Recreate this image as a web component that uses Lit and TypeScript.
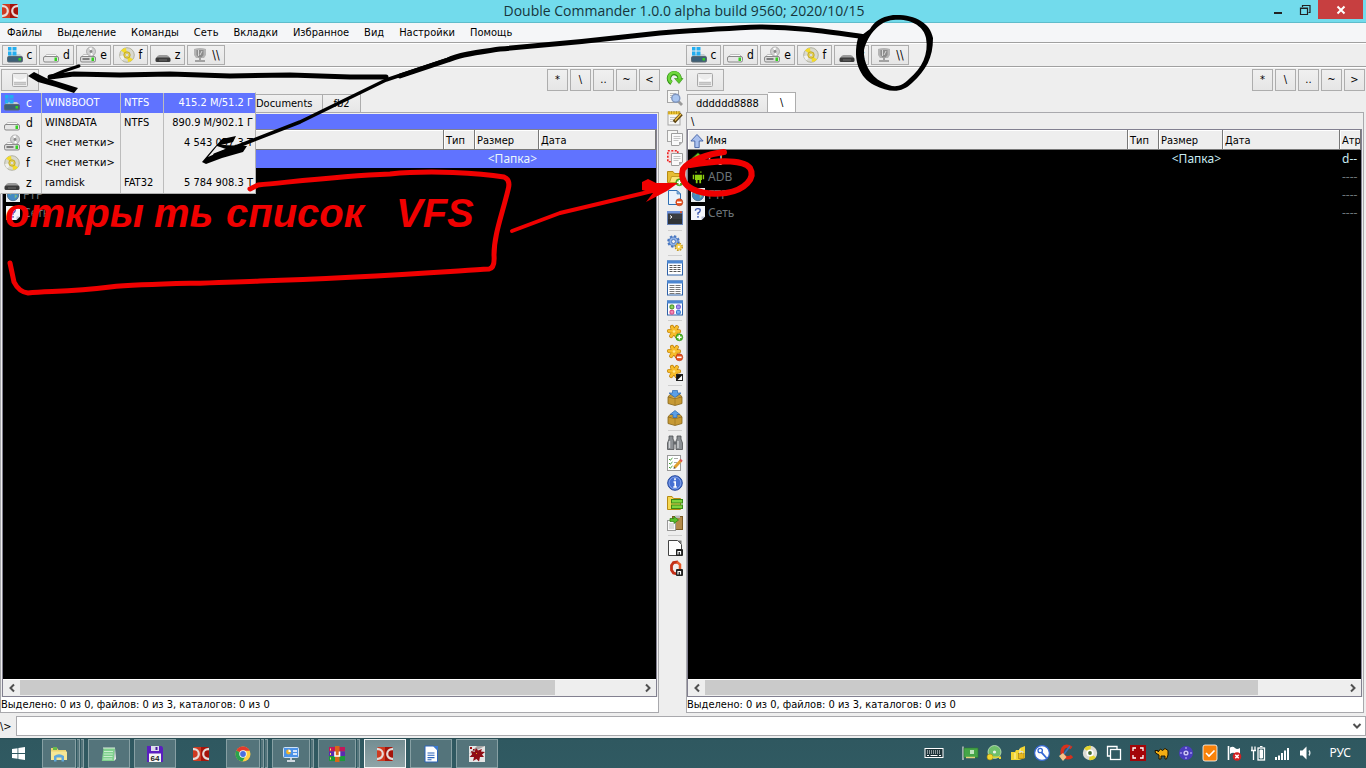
import { LitElement, html, svg, css, nothing, TemplateResult } from "lit";
import { customElement } from "lit/decorators.js";
import { classMap } from "lit/directives/class-map.js";

type Icon = TemplateResult;

const icon = (body: Icon, size = 16) =>
  html`<svg class="icon" width=${size} height=${size} viewBox="0 0 16 16" aria-hidden="true">${body}</svg>`;

/* ---- drives ---- */
const driveBody = (fill: string, led = true) => svg`
  <path d="M2 9.500 L3.500 7.500 H12.500 L14.500 9.500 Z" fill="#fafafa" stroke="#aaa" stroke-width=".7"/>
  <rect x=".5" y="9.500" width="15" height="5.500" rx="1.500" fill=${fill} stroke="#888"/>
  ${led ? svg`<rect x="11.500" y="10.500" width="2.500" height="3.500" fill="#35d020"/>` : nothing}`;
const iDriveC = svg`
  <path d="M1 9.500 L3 7 H13 L15.500 9.500 Z" fill="#c3ccd1"/>
  <rect x=".5" y="9.500" width="15" height="5.500" rx="1.200" fill="#3d5f77" stroke="#5b6870"/>
  <rect x="11.500" y="11" width="2.500" height="2.500" fill="#35d020"/>
  <path d="M1 0h3.500v3.500H1zM5.500 0H9.500v3.500H5.500zM1 4.500h3.500v4H1zM5.500 4.500H9.500v4H5.500z" fill="#23aef0"/>`;
const iDriveD = driveBody("#e6e6e6");
const iDriveE = svg`
  ${driveBody("#dcdcdc")}
  <circle cx="11" cy="4.500" r="4.500" fill="#d0d0d0" stroke="#999" stroke-width=".7"/>
  <path d="M11 4.500 L9 1 A4 4 0 0 1 12 .6 ZM11 4.500 L13 8 A4 4 0 0 1 10.500 8.400Z" fill="#fff"/>
  <circle cx="11" cy="4.500" r="1.400" fill="#888"/>
  <path d="M2.500 12h7" stroke="#555" stroke-width="1.400"/>`;
const iDriveF = svg`
  <circle cx="8" cy="8" r="7.300" fill="#d9d9cf" stroke="#a5a58f" stroke-width=".8"/>
  <path d="M8 8 L2 3.500 A7.300 7.300 0 0 1 7 .9 ZM8 8 L14 12.500 A7.300 7.300 0 0 1 9 15Z" fill="#f4dc28"/>
  <path d="M8 8 L.9 9 A7 7 0 0 0 3.500 13.500Z" fill="#f0f0f0"/>
  <circle cx="8" cy="8" r="3.200" fill="#eed84c" stroke="#b39a20" stroke-width=".8"/>
  <circle cx="8" cy="8" r="1.300" fill="#fff" stroke="#999" stroke-width=".5"/>`;
const iDriveZ = svg`
  <path d="M1 11 Q3 7.500 5 8 H11 Q13 7.500 15 11 V12 H1Z" fill="#9a9a9a"/>
  <rect x=".5" y="10.500" width="15" height="4.500" rx="1.500" fill="#3c3c3c"/>
  <path d="M4 13h8" stroke="#6f6f6f"/>`;
const iNet = svg`
  <path d="M2 2 Q8 0 14 2 V8 L12 11 H4 L2 8Z" fill="#b4b4b4"/>
  <path d="M4.500 3 H11.500 V8 L9.500 10.500 H6.500 L4.500 8Z" fill="#8c8c8c"/>
  <path d="M6.500 3v6M10 4l-2 4" stroke="#d9d9d9"/>
  <path d="M3 14 H13 M8 11 V14" stroke="#a2a2a2" stroke-width="2"/>`;
const iDriveGray = svg`
  <rect x=".5" y="1.500" width="15" height="13" rx="1" fill="#ececec" stroke="#a8a8a8"/>
  <path d="M2 5 Q8 11 14 5 V9 H2Z" fill="#fbfbfb"/>
  <rect x="2" y="10" width="12" height="3" fill="#c0c0c0"/>
  <path d="M2.500 11.500h11" stroke="#dedede" stroke-dasharray="1 1"/>`;

/* ---- column of commands ---- */
const iRefresh = svg`<path d="M4.500 13 A5.300 5.300 0 1 1 12.500 9" fill="none" stroke="#2f8f12" stroke-width="4.400"/>
  <path d="M7.500 8.500 H16 L12 13.500Z" fill="#5cc92c" stroke="#2f8f12" stroke-width=".6"/>
  <path d="M4.500 12.500 A5.300 5.300 0 1 1 12.500 9" fill="none" stroke="#6ed63c" stroke-width="2.800"/>`;
const paper = (x: number, y: number, w: number, h: number) => svg`
  <rect x=${x} y=${y} width=${w} height=${h} fill="#f7f7f5" stroke="#a5a5a5"/>`;
const iView = svg`${paper(0.5, 0.5, 11, 12)}<path d="M3 3.500h6M3 5.500h3M3 7.500h2" stroke="#bbb"/>
  <path d="M11.500 11.500 L15 15" stroke="#9a9a9a" stroke-width="2.800"/>
  <circle cx="8.800" cy="8.300" r="4" fill="#a9c5ef" stroke="#7f95bd" stroke-width="1.400"/>`;
const iEdit = svg`${paper(1, 2, 12, 13)}<path d="M1 1.500h12v3H1z" fill="#efc52e"/><path d="M2 1v3M4.500 1v3M7 1v3M9.500 1v3M12 1v3" stroke="#a98210" stroke-width=".7"/>
  <path d="M3 7.500h7M3 9.500h5M3 11.500h6" stroke="#c5c5c5"/><path d="M7 12 L14.500 4" stroke="#5d4410" stroke-width="3.400"/><path d="M8 10.500 L14 4" stroke="#f0c24a" stroke-width="1.400"/>`;
const iCopy = svg`${paper(0.5, 0.5, 10, 11)}<path d="M4.500 3.500H15.500V12L12 15.500H4.500Z" fill="#fafafa" stroke="#9d9d9d"/>
  <path d="M6.500 6.500h7M6.500 8.500h7M6.500 10.500h5" stroke="#c4c4c4"/><path d="M12 15.500V12H15.500Z" fill="#aaa"/>`;
const iMove = svg`<rect x=".8" y=".8" width="10" height="11" fill="#f6dada" stroke="#ee2222" stroke-width="1.600" stroke-dasharray="2 1.500"/>
  <path d="M4.500 3.500H15.500V12L12 15.500H4.500Z" fill="#fafafa" stroke="#9d9d9d"/><path d="M6.500 6.500h7M6.500 8.500h7M6.500 10.500h5" stroke="#c4c4c4"/><path d="M12 15.500V12H15.500Z" fill="#aaa"/>`;
const plus = svg`<circle cx="12.300" cy="12.300" r="3.500" fill="#4fb82a" stroke="#2b8a12" stroke-width=".6"/><path d="M12.300 10v4.600M10 12.300h4.600" stroke="#fff" stroke-width="1.400"/>`;
const minus = svg`<circle cx="12.300" cy="12.300" r="3.500" fill="#e8501e" stroke="#b53610" stroke-width=".6"/><path d="M10 12.300h4.600" stroke="#fff" stroke-width="1.600"/>`;
const iMkdir = svg`<path d="M.5 1.500H6L7.500 3.500H13.500V12.500H.5Z" fill="#e6bd33" stroke="#b78a12"/><path d="M2.500 12.500 L4.500 6.500H15.500L13 12.500Z" fill="#fbe577" stroke="#c29a22"/>${plus}`;
const iDelete = svg`<path d="M1.500 .5H10L13.500 4V14.500H1.500Z" fill="#e9f2fb" stroke="#2f6fb3"/><path d="M10 .5V4H13.500Z" fill="#8ab6e0" stroke="#2f6fb3" stroke-width=".6"/>${minus}`;
const iTerm = svg`<rect x=".5" y="1.500" width="15" height="13" fill="#3a3d42" stroke="#6683bb"/><path d="M0 1h16v2.500H0z" fill="#6e91d8"/><rect x="13" y="1.300" width="2" height="1.600" fill="#e7521f"/>
  <path d="M3 5.500 L5 7 L3 8.500" fill="none" stroke="#fff"/><path d="M1 9h14v5H1z" fill="#202226" opacity=".4"/>`;
const iGears = svg`<circle cx="6.500" cy="6.500" r="5" fill="none" stroke="#4a79c2" stroke-width="2.600" stroke-dasharray="2.200 1.700"/><circle cx="6.500" cy="6.500" r="4.600" fill="#8fb1e6" stroke="#3c6bb5" stroke-width=".8"/><circle cx="6.500" cy="6.500" r="2" fill="#eee" stroke="#3c6bb5" stroke-width=".8"/>
  <circle cx="11.800" cy="11.800" r="3.300" fill="none" stroke="#c2930f" stroke-width="1.800" stroke-dasharray="1.600 1"/><circle cx="11.800" cy="11.800" r="2.900" fill="#f7cf4a"/><circle cx="11.800" cy="11.800" r="1.100" fill="#fff"/>`;
const win = svg`<rect x=".5" y="1" width="15" height="14" fill="#fff" stroke="#2f62a8"/><path d="M0 .5h16v3H0z" fill="#4c86d0"/>`;
const iBrief = svg`${win}<path d="M2.500 5.500h11M2.500 7.500h11M2.500 9.500h11M2.500 11.500h11" stroke="#555" stroke-dasharray="3 1"/>`;
const iFull = svg`${win}<path d="M2.500 5.500h11M2.500 7.500h11M2.500 9.500h11M2.500 11.500h11M2.500 13.500h11" stroke="#777" stroke-dasharray="5 1"/>`;
const iThumb = svg`${win}<rect x="3" y="5" width="3.800" height="3.800" rx="1" fill="#8bd05c" stroke="#3c8a1c"/><rect x="9.500" y="5" width="3.800" height="3.800" rx="1" fill="#a896ee" stroke="#6a4fd0"/>
  <rect x="3" y="10.300" width="3.800" height="3.800" rx="1" fill="#f08ab4" stroke="#d03a7a"/><rect x="9.500" y="10.300" width="3.800" height="3.800" rx="1" fill="#7ab0ee" stroke="#2a70cc"/>`;
const petals = "M7 6.500 L5 2 M7 6.500 L9.800 2.200 M7 6.500 L12 6.300 M7 6.500 L9.500 11 M7 6.500 L4.200 11 M7 6.500 L2 6";
const star = svg`<path d=${petals} stroke="#bd7d08" stroke-width="4.200" stroke-linecap="round"/><path d=${petals} stroke="#f7bd2c" stroke-width="2.800" stroke-linecap="round"/><circle cx="7" cy="6.500" r="1.300" fill="#fde48a"/>`;
const iStarPlus = svg`${star}${plus}`;
const iStarMinus = svg`${star}${minus}`;
const iStarInv = svg`${star}<rect x="9.500" y="9.500" width="6" height="6" fill="#fff" stroke="#222"/><path d="M10 10h5.500L10 15.500Z" fill="#111"/>`;
const box = svg`<path d="M1 7 L3 4.500 H13 L15 7 V13.500 L8 15.500 L1 13.500Z" fill="#c79a35" stroke="#86641a" stroke-width=".8"/><path d="M1 7 L8 8.500 L15 7" fill="#e3c06a" stroke="#86641a" stroke-width=".8"/><path d="M8 8.500V15" stroke="#a67e28"/>`;
const iPack = svg`${box}<path d="M5.500 .5h5v2.500H14L8 7.500 2 3h3.500Z" fill="#5b9fe6" stroke="#2b66ae" stroke-width=".7"/>`;
const iUnpack = svg`${box}<path d="M6 7.500h4v-3H13L8 .5 3 4.500h3Z" fill="#5b9fe6" stroke="#2b66ae" stroke-width=".7"/>`;
const iFind = svg`<path d="M2 1h4v3l1 2v8.500H.5V8L2 4ZM10 1h4v3l1.500 4v6.500H9V6l1-2Z" fill="#8b8f93" stroke="#4c4f52" stroke-width=".8"/><path d="M2.500 6v7M11 6v7" stroke="#cfd2d4" stroke-width="1.400"/><path d="M6.500 6.500h3v3h-3z" fill="#63676a"/>`;
const iMulti = svg`<rect x=".5" y=".5" width="13" height="15" fill="#fff" stroke="#999"/><path d="M2 4l1.200 1.200L5.500 3M2 8l1.200 1.200L5.500 7M2 12l1.200 1.200L5.500 11" fill="none" stroke="#3a9b2a"/><path d="M7 3.500h4M7 7.500h3" stroke="#aaa"/>
  <path d="M7.500 12.500 L14 5.500" stroke="#e0a030" stroke-width="3"/><path d="M13 4.500l2 2" stroke="#dd5555" stroke-width="2"/><path d="M6.500 13.800l.5-2 1.500 1.400Z" fill="#333"/>`;
const iInfo = svg`<circle cx="8" cy="8" r="7.300" fill="#4670d2" stroke="#274a9c"/><circle cx="8" cy="8" r="5.900" fill="none" stroke="#9ab5f2" stroke-width=".7"/><path d="M8 3.200v2M6.500 7h1.700v5M6.300 12h3.500" fill="none" stroke="#fff" stroke-width="1.600"/>`;
const iSync = svg`<path d="M.5 1.500H5L6.500 3.500H13.500V14.500H.5Z" fill="#f4d750" stroke="#b78a12"/><rect x="4.500" y="4.500" width="11" height="3.500" fill="#7ed43e" stroke="#3c8716"/><rect x="4.500" y="10" width="11" height="3.500" fill="#7ed43e" stroke="#3c8716"/>`;
const iCopyNames = svg`<rect x="5.500" y="1.500" width="10" height="13" fill="#b38a4a" stroke="#7b5b24"/><rect x="8" y=".5" width="5" height="2.500" fill="#bbb"/><rect x=".5" y="5.500" width="8" height="10" fill="#fafafa" stroke="#999"/><path d="M2 9h5M2 11h5M2 13h5" stroke="#bbb"/><path d="M3 3.500H7V1.500L11.500 5L7 8.500V6.500H3Z" fill="#57c22c" stroke="#2c7d10" stroke-width=".7"/>`;
const linkMark = svg`<rect x="9" y="9" width="7" height="7" rx="1" fill="#222"/><path d="M11 14.500v-3h2.500v3" fill="none" stroke="#fff" stroke-width="1.200"/>`;
const iNewDoc = svg`<path d="M1.500 .5H10.500L14.500 4.500V15.500H1.500Z" fill="#fff" stroke="#444"/><path d="M10.500 .5H14.500V4.500Z" fill="#777"/>${linkMark}`;
const iOffice = svg`<path d="M11 2 L6.500 2.500 L4.500 5.500 V10 L6.500 13 L10 14" fill="none" stroke="#c22f17" stroke-width="2.800"/><path d="M10 2 L13 4.500 V9" fill="none" stroke="#e65a2a" stroke-width="2.500"/>${linkMark}`;

/* ---- file list ---- */
const iUp = svg`<path d="M8 1 L15 7.500 H11 V11 H14 V14.500 H5 V7.500 H1Z" fill="#6cc62c" stroke="#2f7f12"/>`;
const iAndroid = svg`<path d="M4.500 5.500h8v6h-8zM2 5.500h1.600v5H2zM13.400 5.500H15v5h-1.600zM5.500 11.500h2v3.500h-2zM9.500 11.500h2v3.500h-2z" fill="#8ccf10"/><path d="M5 3.500h1.500v-2H5zM10.500 3.500H12v-2h-1.500z" fill="#8ccf10" opacity=".7"/>`;
const iFtp = svg`<path d="M0 0h16v16H0z" fill="#e8eef2"/><circle cx="8" cy="8" r="6.500" fill="#4389c4" stroke="#4a6d88"/><path d="M4 5 Q7 2 9 4 Q8 7 6 7 T5 10ZM10 7 L13 9 L10 12Z" fill="#7dbb83"/>`;
const iUnknown = svg`<path d="M0 0h16v12l-4 4H0z" fill="#f3f5fb"/><path d="M12 16v-4h4Z" fill="#b9c1d6"/><path d="M5 5.500 Q5 3 8 3 T10.500 5.200 Q10.500 7 8 8 V10M8 11.500v2" fill="none" stroke="#3a56b0" stroke-width="1.600"/>`;
const iSort = svg`<path d="M8 .5 L15 8 H10.500 V15.500 H5.500 V8 H1Z" fill="#a9c0ee" stroke="#3d5ba0"/>`;

/* ---- logos ---- */
const iDC = svg`<rect x="0" y="1" width="16" height="14" rx="1.500" fill="#cf3a20"/><path d="M8 1h6.500L16 2.500v11L14.500 15H8z" fill="#a5140a"/>
  <path d="M0 3.200 H1 A4.800 4.800 0 0 1 1 12.800 H0M16 3.200 H15 A4.800 4.800 0 0 0 15 12.800 H16" fill="none" stroke="#e6dbd8" stroke-width="2.200"/>`;
const iStart = svg`<path d="M0 2.500 L6.800 1.500V7.500H0ZM7.800 1.300 L16 0V7.500H7.800ZM0 8.500H6.800V14.500L0 13.500ZM7.800 8.500H16V16L7.800 14.700Z" fill="#fff"/>`;
const iExplorer = svg`<path d="M0 2H6L7.500 4H15V14H0Z" fill="#ecd572"/><path d="M2 1h4v3H2z" fill="#66b84a"/><path d="M0 5.500H16V14H0Z" fill="#f6e796"/><path d="M3 15.500V10Q8 6.500 13 10V15.500H10.500V11.500H5.500V15.500Z" fill="#5fa8dd"/>`;
const iNotepad = svg`<path d="M2.500 2H14L13 15H.8Z" fill="#7fd08d"/><path d="M3 5.500h9M2.800 8h9M2.500 10.500h9M2.300 13h9" stroke="#c9f0cf"/><path d="M3 1v2M5 1v2M7 1v2M9 1v2M11 1v2M13 1v2" stroke="#dceedd"/><path d="M14 2l1 11-2 2Z" fill="#eee"/>`;
const iFloppy = svg`<path d="M0 0h14.500L16 1.500V16H0z" fill="#5a1fc0"/><path d="M4 0h8v5H4z" fill="#dcdcec"/><path d="M8.500 1h2v3h-2z" fill="#4416a0"/><path d="M2 7.500h12V16H2z" fill="#f5f5f5"/><text x="8" y="15" text-anchor="middle" font-family="Liberation Sans" font-weight="bold" font-size="8" fill="#222">64</text>`;
const iChrome = svg`<circle cx="8" cy="8" r="7.500" fill="#ffce43"/><path d="M8 8 L1.400 4.400 A7.500 7.500 0 0 1 14.800 4.800H8Z" fill="#e33b2e"/><path d="M8 8 L1.400 4.400 A7.500 7.500 0 0 0 7.500 15.500L10.800 9.600Z" fill="#2ba24c"/><circle cx="8" cy="8" r="3.700" fill="#fff"/><circle cx="8" cy="8" r="2.900" fill="#4a6fe0"/>`;
const iMonitor = svg`<rect x=".5" y="1.500" width="15" height="10" rx="1" fill="#4c93e8" stroke="#cde2f7"/><path d="M4 15h8M8 12v3" stroke="#cfd8e0" stroke-width="1.800"/><circle cx="5.500" cy="6" r="2.400" fill="#f0b22a"/><path d="M5.500 6V3.600A2.400 2.400 0 0 1 7.900 6Z" fill="#fff"/><path d="M10 5h4M10 8h4" stroke="#fff" stroke-width="1.400"/>`;
const iRar = svg`<path d="M0 1h16v4.500H0z" fill="#c2185b"/><path d="M0 5.500h16V10H0z" fill="#5b2bb0"/><path d="M0 10h16v5H0z" fill="#1e9b3a"/><path d="M6 0h4.500v16H6z" fill="#d9661a"/><path d="M6 5.500v4.500h4.500V5.500" fill="none" stroke="#fff" stroke-width="1.600"/><path d="M1.500 2.500v2M1.500 7v2M1.500 11.500v2" stroke="#ffe45c"/>`;
const iWriter = svg`<path d="M2 0H10.500L14.500 4V16H2Z" fill="#fff" stroke="#2b63ba"/><path d="M10.500 0H15V4.500Z" fill="#3b7bd4"/><path d="M4.500 7h7M4.500 9.300h7M4.500 11.600h7M4.500 13.700h4" stroke="#2b63ba" stroke-width="1.100"/>`;
const iSplat = svg`<path d="M0 0h16v16H0z" fill="#e5e5e5"/><path d="M0 8 L8 0 H16Z" fill="#a5a5a5"/><path d="M7 2 L9 4.500 L13 3 L12 5.500 L16 6 L13 8.500 L15 11 L11 11 L10 15.500 L7.500 13 L4 15 L5 11 L.5 11 L3 8.500 L2 5 L5.500 6Z" fill="#8f0c14"/><path d="M1 1h2v2H1zM4 3h1.500v1.500H4z" fill="#9c0a10"/><path d="M7 7h1v1H7z" fill="#e8a020"/>`;

const tray: [string, Icon][] = [
  ["Сетевая карта", svg`<path d="M1 1.500V15" stroke="#ccc" stroke-width="1.400"/><rect x="2" y="3" width="14" height="9.500" fill="#46a548" stroke="#2b7a30" stroke-width=".6"/><rect x="8" y="5" width="4" height="4" fill="#bfe3bd"/><path d="M4 12.500h9" stroke="#e4d27c" stroke-width="1.500"/>`],
  ["Ключ", svg`<circle cx="8.500" cy="7" r="6.500" fill="#6fc06c" stroke="#c5e3c1" stroke-width=".8"/><circle cx="8.500" cy="7" r="1.600" fill="#e8f4e6"/><circle cx="4" cy="12" r="3" fill="#f2d72c" stroke="#a48a10" stroke-width=".6"/><path d="M6.500 11.500H15V14H13V12.700H6.500Z" fill="#f2d72c"/>`],
  ["Защита папок", svg`<path d="M1 7H5L6 5H9L10 3L15 1V13L9 15H1Z" fill="#f2d534"/><path d="M5 8v6M10 4v4" fill="none" stroke="#fff5b4"/><rect x="8.500" y="8.500" width="5.500" height="5" fill="#e8b81e" stroke="#9c7a10" stroke-width=".6"/><path d="M9.800 8.500V6.500h3v2" fill="none" stroke="#ddd"/>`],
  ["Пароли", svg`<circle cx="8" cy="8" r="7.400" fill="#fff" stroke="#3568d4" stroke-width="1.200"/><circle cx="6.200" cy="5.500" r="2.200" fill="none" stroke="#3568d4" stroke-width="1.300"/><path d="M7.500 7.300L12.500 13" stroke="#3568d4" stroke-width="1.800"/>`],
  ["Очистка", svg`<path d="M13.500 3 Q8 -1 5 3.500 Q2.500 9 7 12 Q11 14 14 11" fill="none" stroke="#d8301c" stroke-width="3.400"/><path d="M12 1L6 9" stroke="#3c70b8" stroke-width="1.600"/><path d="M1 11L5 8L8.500 12L5 16Z" fill="#f0c48c"/>`],
  ["Диск", svg`<circle cx="8" cy="8" r="7.200" fill="#dcdcd4"/><path d="M8 8L2 3.500A7.300 7.300 0 0 1 9 .9ZM8 8l6 4.500A7.300 7.300 0 0 1 7 15Z" fill="#e3d42c"/><circle cx="8" cy="8" r="3.600" fill="#fff"/><circle cx="8" cy="8" r="1.900" fill="#446a30"/>`],
  ["Окна", svg`<path d="M4 11H1.500V1.500H11V4" fill="none" stroke="#fff" stroke-width="1.300"/><rect x="4.500" y="4.500" width="10" height="10" fill="none" stroke="#fff" stroke-width="1.300"/>`],
  ["Снимок экрана", svg`<path d="M0 0h16v16H0z" fill="#a30508"/><path d="M3 6V3h3M10 3h3v3M13 10v3h-3M6 13H3v-3" fill="none" stroke="#fff" stroke-width="1.300"/>`],
  ["Верблюд", svg`<path d="M1 5.500H4V7L6.500 4L8.500 5.500L11 3.500L14 5.500V10L12.500 14H11V11H7V14H5V10L1.500 8Z" fill="#f2ae14" stroke="#1c1400"/>`],
  ["Проигрыватель", svg`<circle cx="8" cy="8" r="7" fill="#4a3dbe"/><circle cx="8" cy="8" r="2.600" fill="#cdc6f6"/><circle cx="8" cy="8" r="1.100" fill="#3f338c"/><path d="M8 2v2M8 12v2M2 8h2M12 8h2" stroke="#8a7ee0" stroke-width="2"/>`],
  ["Задачи", svg`<rect x="1" y="0" width="14" height="16" rx="2" fill="#f8820a" stroke="#fff" stroke-width=".8"/><path d="M4 8l3 3 5.500-5.500" fill="none" stroke="#fff" stroke-width="1.600"/>`],
  ["Центр поддержки", svg`<path d="M2.500 1v14" stroke="#fff" stroke-width="1.600"/><path d="M4 2.500Q7 1 9 3T14 3V9Q11 10 9 8.500T4 9Z" fill="#fff"/><circle cx="11" cy="11.500" r="4.300" fill="#d42020"/><path d="M9.300 9.800l3.400 3.400M12.700 9.800l-3.400 3.400" stroke="#fff" stroke-width="1.500"/>`],
  ["Питание", svg`<rect x="8" y="3" width="6.500" height="12" fill="none" stroke="#fff" stroke-width="1.300"/><path d="M10 1.500h2.500M10 5h2.500v8H10z" stroke="#fff" fill="#fff"/><path d="M2 1.500V5M5 1.500V5M1 5.500h5M3.500 5v10" stroke="#fff" stroke-width="1.300" fill="none"/>`],
  ["Сеть", svg`<path d="M1 12h2v3H1zM4 10.500h2V15H4zM7 8h2v7H7zM10 5.500h2V15h-2zM13 3h2v12h-2z" fill="#fff"/>`],
  ["Громкость", svg`<path d="M2 5.500H4.500L8.500 1.500V14.500L4.500 10.500H2Z" fill="#fff"/><path d="M11 5.500Q12.800 8 11 10.500" fill="none" stroke="#dfe9ea" stroke-width="1.300"/>`],
];
const iKeyboard = svg`<rect x="-1" y="3.500" width="18" height="9" fill="#1d3338" stroke="#fff"/><path d="M1 6h14M1 8h14" stroke="#fff" stroke-dasharray="1 1"/><path d="M1 10.500h2M4.500 10.500h7M13 10.500h2" stroke="#fff"/>`;

const drives: { letter: string; icon: Icon; label: string; fs: string; size: string }[] = [
  { letter: "c", icon: iDriveC, label: "WIN8BOOT", fs: "NTFS", size: "415.2 M/51.2 Г" },
  { letter: "d", icon: iDriveD, label: "WIN8DATA", fs: "NTFS", size: "890.9 M/902.1 Г" },
  { letter: "e", icon: iDriveE, label: "<нет метки>", fs: "", size: "4 543 057.3 Т" },
  { letter: "f", icon: iDriveF, label: "<нет метки>", fs: "", size: "" },
  { letter: "z", icon: iDriveZ, label: "ramdisk", fs: "FAT32", size: "5 784 908.3 Т" },
];

const commands: ([string, Icon] | null)[] = [
  ["Обновить", iRefresh], ["Просмотр", iView], ["Правка", iEdit], ["Копировать", iCopy],
  ["Переместить", iMove], ["Создать каталог", iMkdir], ["Удалить", iDelete], ["Терминал", iTerm], null,
  ["Параметры", iGears], null,
  ["Краткий", iBrief], ["Подробный", iFull], ["Эскизы", iThumb], null,
  ["Выделить группу", iStarPlus], ["Снять выделение", iStarMinus], ["Инвертировать", iStarInv], null,
  ["Упаковать", iPack], ["Распаковать", iUnpack], null,
  ["Поиск", iFind], ["Групповое переименование", iMulti], ["Свойства", iInfo],
  ["Синхронизация", iSync], ["Копировать имена", iCopyNames], null,
  ["Новый документ", iNewDoc], ["Офис", iOffice],
];

const files = [
  { name: "[..]", icon: iUp, size: "<Папка>", attr: "d--", up: true },
  { name: "ADB", icon: iAndroid, size: "", attr: "----", up: false },
  { name: "FTP", icon: iFtp, size: "", attr: "----", up: false },
  { name: "Сеть", icon: iUnknown, size: "", attr: "----", up: false },
];

const tasks: { name: string; icon: Icon; kind: string; stack: number }[] = [
  { name: "Проводник", icon: iExplorer, kind: "open", stack: 2 },
  { name: "Блокнот", icon: iNotepad, kind: "open", stack: 0 },
  { name: "Дискета", icon: iFloppy, kind: "open", stack: 0 },
  { name: "Double Commander", icon: iDC, kind: "pinned", stack: 0 },
  { name: "Chrome", icon: iChrome, kind: "open", stack: 2 },
  { name: "Панель управления", icon: iMonitor, kind: "open", stack: 1 },
  { name: "WinRAR", icon: iRar, kind: "open", stack: 1 },
  { name: "Double Commander", icon: iDC, kind: "active", stack: 0 },
  { name: "Writer", icon: iWriter, kind: "open", stack: 0 },
  { name: "Просмотр", icon: iSplat, kind: "open", stack: 0 },
];

const chevron = (d: string) =>
  html`<svg width="8" height="8" viewBox="0 0 8 8" aria-hidden="true"><path d=${d} fill="none" stroke="#505050" stroke-width="2"/></svg>`;

@customElement("app-root")
export class AppRoot extends LitElement {
  static styles = css`
    :host {
      display: flex; flex-direction: column; position: relative; height: 100vh; overflow: hidden;
      background: #eeeeee; color: #000;
      font: 11px/14px "DejaVu Sans Condensed", "Noto Sans", sans-serif;
      --blue: #6073ff;
    }
    * { box-sizing: border-box; }
    button, input { font: inherit; color: inherit; margin: 0; padding: 0; border: 0; background: none; border-radius: 0; }
    .icon, svg { display: block; flex: none; overflow: visible; }
    .title { height: 23px; flex: none; background: #72dbec; border-bottom: 1px solid #5fbccb; display: grid; grid-template-columns: 1fr auto 1fr; align-items: center; padding-left: 2px; }
    .title h1 { margin: 0; font: 14px/22px "Open Sans", sans-serif; color: #17353b; }
    .winbtns { display: flex; justify-content: flex-end; align-self: start; padding-right: 3px; }
    .winbtns button { width: 27px; height: 19px; display: grid; place-items: center; }
    .winbtns .close { width: 45px; background: #c73f40; }
    .menu { height: 20px; flex: none; background: #f5f6f8; border-bottom: 1px solid #a0a0a0; display: flex; gap: 15px; padding: 1px 0 0 7px; align-items: center; }
    .menu button { line-height: 18px; }
    .drivebar { height: 24px; flex: none; display: grid; grid-template-columns: 684fr 682fr; border-top: 1px solid #fff; border-bottom: 1px solid #a0a0a0; }
    .drivebar div { display: flex; gap: 2px; padding: 1px 2px; }
    .btn { border: 1px solid #adadad; background: linear-gradient(#f0f0f0, #e6e6e6); display: flex; align-items: center; justify-content: center; }
    .drivebar .btn { width: 35px; height: 20px; gap: 4px; font-size: 12px; }
    .drivebar .net { width: 38px; }
    .main { flex: 1; min-height: 0; display: grid; grid-template-columns: minmax(0, 660fr) 26px minmax(0, 680fr); border-top: 1px solid #fff; }
    .panel { display: flex; flex-direction: column; min-width: 0; min-height: 0; position: relative; }
    .nav { display: flex; gap: 2px; padding: 1px 1px 0 0; height: 24px; flex: none; }
    .nav .btn { width: 21px; height: 22px; }
    .nav .drive { width: 38px; margin-right: auto; }
    .left .nav { padding-right: 0; }
    .left .drive { margin-left: 1px; }
    .tabs { height: 20px; flex: none; display: flex; align-items: flex-end; padding-left: 1px; }
    .left .tabs { padding-left: 245px; }
    .tab { height: 18px; border: 1px solid #adadad; border-bottom: 0; padding: 0 8px; background: linear-gradient(#f0f0f0, #e6e6e6); }
    .left .tab { padding: 0 10px; }
    .tab + .tab { border-left: 0; }
    .tab.on { height: 20px; background: #fff; padding: 0 12px; }
    .frame { flex: 1; min-height: 0; display: flex; flex-direction: column; border: 1px solid #a9a9ad; padding-top: 1px; margin-right: 1px; }
    .right .frame { margin-right: 2px; }
    .path { height: 15px; flex: none; padding-left: 3px; margin: 0 1px; line-height: 15px; }
    .left .path { background: var(--blue); }
    .view { flex: 1; min-height: 0; border: 1px solid #828090; background: #000; margin: 0 1px 0 0; display: flex; flex-direction: column; overflow: hidden; }
    .left .view { margin-left: 1px; }
    .list { flex: 1; min-height: 0; overflow: hidden; }
    table { border-collapse: separate; border-spacing: 0; table-layout: fixed; width: 100%; }
    th, td { padding: 0; text-align: left; font-weight: normal; white-space: nowrap; overflow: hidden; }
    th { height: 20px; background: #eeeeee; border-right: 1px solid #787878; border-bottom: 1px solid #787878; box-shadow: inset 1px 1px #fff; padding: 3px 0 0 2px; }
    .c-type { width: 31px; } .c-size { width: 64px; } .c-date { width: 117px; } .c-attr { width: 21px; }
    .head, .cell { display: flex; align-items: center; gap: 2px; }
    .cell { padding-left: 3px; gap: 3px; }
    td { height: 18px; color: #6c7478; font: 12px/18px "Noto Sans", sans-serif; }
    .up td { color: #c8ebf2; }
    .up .name { color: #fff; }
    .sel td, .sel .name { background: var(--blue); color: #eaf6fa; }
    .num { text-align: right; padding-right: 2px; }
    .attr { padding-left: 2px; }
    .scroll { height: 17px; flex: none; background: #eeeeee; border-top: 1px solid #fff; display: flex; padding-bottom: 1px; }
    .scroll button { width: 17px; display: grid; place-items: center; }
    .track { flex: 1; display: flex; }
    .thumb { background: #cacaca; width: 86.500%; }
    .status { height: 15px; flex: none; background: #fff; line-height: 15px; white-space: nowrap; }
    .commands { display: flex; flex-direction: column; align-items: center; padding-left: 3px; position: relative; }
    .commands button { width: 20px; height: 20px; display: grid; place-items: center; flex: none; }
    .commands hr { width: 14px; height: 1px; margin: 2px 0; border: 0; background: #cfcfcf; flex: none; }
    .cmd { display: flex; height: 25px; flex: none; padding: 3px 0 2px; align-items: stretch; }
    .cmd label { width: 16px; line-height: 22px; }
    .box { flex: 1; display: flex; background: #fff; border: 1px solid #a9a9ad; }
    .box input { flex: 1; min-width: 0; outline: 0; }
    .box button { width: 17px; display: grid; place-items: center; }
    .taskbar { height: 30px; flex: none; display: flex; background: linear-gradient(#264a51, #2f5860 2px, #305a62); align-items: stretch; color: #fff; }
    .start { width: 42px; display: grid; place-items: center; padding-right: 5px; }
    .tasks { display: flex; gap: 4px; }
    .task { width: 42px; display: flex; gap: 1px; padding-top: 1px; }
    .task .face { flex: 1; display: grid; place-items: center; }
    .open .face, .open .leaf { background: #54747b; border: 1px solid #87a0a4; }
    .open .leaf { border-left: 0; }
    .leaf { width: 3px; flex: none; }
    .active .face { background: linear-gradient(#738d92, #8fa4a7); border: 1px solid #f2f5f5; }
    .tray { margin-left: auto; display: flex; align-items: center; padding-right: 15px; }
    .tray button { width: 24px; height: 28px; display: grid; place-items: center; }
    .tray .kbd { margin-right: 12px; }
    .tray .lang { width: auto; padding-left: 11px; font: 12px/28px "Noto Sans", sans-serif; }
    .popup { position: absolute; left: 0; top: 24px; width: 256px; z-index: 2; background: #eeeeee; border: 1px solid #b0b0b0; border-top-color: #eee; border-left-color: #eee; }
    .popup td { height: 20px; font: 11px/20px "DejaVu Sans Condensed", "Noto Sans", sans-serif; color: #000; padding-left: 3px; }
    .popup td + td { border-left: 1px solid #bcbcbc; }
    .popup .p1 { width: 40px; } .popup .p2 { width: 79px; } .popup .p3 { width: 43px; }
    .popup .cur td { background: var(--blue); color: #fff; }
    .popup .amount { text-align: right; padding-right: 2px; }
    .popup .cell { padding: 0; gap: 6px; font-size: 12px; }
    .marks { position: absolute; left: 0; top: 0; z-index: 3; pointer-events: none; }
    .marks text { font: italic bold 40px "Liberation Sans", sans-serif; fill: #f00000; }
  `;

  driveButtons() {
    return html`<div>
      ${drives.map((d) => html`<button class="btn">${icon(d.icon)}<span>${d.letter}</span></button>`)}
      <button class="btn net">${icon(iNet)}<span>\\\\</span></button>
    </div>`;
  }

  fileTable(active: boolean, attrs: boolean) {
    return html`<table>
      <colgroup><col /><col class="c-type" /><col class="c-size" /><col class="c-date" />${attrs ? html`<col class="c-attr" />` : nothing}</colgroup>
      <thead><tr>
        <th><span class="head">${icon(iSort, 14)}Имя</span></th><th>Тип</th><th>Размер</th><th>Дата</th>${attrs ? html`<th>Атр</th>` : nothing}
      </tr></thead>
      <tbody>${files.map((f) => html`<tr class=${classMap({ up: f.up, sel: active && f.up })}>
        <td class="name"><span class="cell">${icon(f.icon, 14)}${f.name}</span></td><td></td>
        <td class="num">${f.size}</td><td></td>${attrs ? html`<td class="attr">${f.attr}</td>` : nothing}
      </tr>`)}</tbody>
    </table>`;
  }

  panel(side: "left" | "right") {
    const left = side === "left";
    return html`<section class="panel ${side}">
      <div class="nav">
        <button class="btn drive" aria-label="Список дисков">${icon(iDriveGray)}</button>
        ${["*", "\\", "..", "~", left ? "<" : ">"].map((t) => html`<button class="btn">${t}</button>`)}
      </div>
      <div class="tabs">
        ${left
          ? html`<button class="tab">Documents</button><button class="tab">fb2</button>`
          : html`<button class="tab">dddddd8888</button><button class="tab on">\\</button>`}
      </div>
      <div class="frame">
        <div class="path">\\</div>
        <div class="view">
          <div class="list">${this.fileTable(left, !left)}</div>
          <div class="scroll">
            <button aria-label="Влево">${chevron("M6 0.500 L2.500 4 L6 7.500")}</button>
            <div class="track"><div class="thumb"></div></div>
            <button aria-label="Вправо">${chevron("M2 0.500 L5.500 4 L2 7.500")}</button>
          </div>
        </div>
        <div class="status">Выделено: 0 из 0, файлов: 0 из 3, каталогов: 0 из 0</div>
      </div>
      ${left ? this.driveMenu() : nothing}
    </section>`;
  }

  driveMenu() {
    return html`<div class="popup"><table>
      <colgroup><col class="p1" /><col class="p2" /><col class="p3" /><col /></colgroup>
      <tbody>${drives.map((d, i) => html`<tr class=${classMap({ cur: i === 0 })}>
        <td><span class="cell">${icon(d.icon)}${d.letter}</span></td><td>${d.label}</td><td>${d.fs}</td><td class="amount">${d.size}</td>
      </tr>`)}</tbody>
    </table></div>`;
  }

  marks() {
    return html`<svg class="marks" width="1366" height="768" viewBox="0 0 1366 768">
      <g fill="none" stroke="#000" stroke-linecap="round" stroke-linejoin="round">
        <path d="M866 37 C830 32 800 27 760 27 C730 28 700 30 660 33 C600 40 560 44 500 49 C480 52 460 54 448 60 L400 76" stroke-width="5"/>
        <path d="M452 58 L386 80 L300 122 L215 155" stroke-width="3.500"/>
        <path d="M50 77 L74 74 L120 75 L170 74 L230 76 L290 75 L350 77 L386 77" stroke-width="5"/>
        <path d="M50 77 L64 71 L79 66" stroke-width="3"/>
      </g>
      <path d="M28 76 L34 72 L46 78 L78 88 L74 93 L56 87 L38 82Z"/>
      <path fill-rule="evenodd" d="M202 162 L213 149 L222 139 L236 136 L233 142 L221 145 L247 146 L243 152 L222 158 L206 164Z M208 157 L226 149 L217 146Z"/>
      <path fill-rule="evenodd" d="M858 38 C852 60 860 78 874 85 C890 93 902 93 912 83 C926 70 933 58 933 38 C930 22 914 14 893 15 C880 17 874 22 870 29Z M864 50 C863 62 870 76 882 82 C893 88 900 88 909 79 C922 68 929 54 926 38 C924 26 910 18 893 20 C880 21 868 34 864 50Z"/>
      <g fill="none" stroke="#f00000" stroke-linecap="round" stroke-linejoin="round">
        <path d="M250 189 L258 185 C300 181 340 176 390 174 C430 170 480 173 504 177 Q511 180 508 190 C502 215 494 235 494 255 Q495 268 489 269 C440 272 360 278 260 281 C200 284 150 283 110 287 C70 292 50 291 28 293 Q19 292 14 282 L10 263" stroke-width="5"/>
        <path d="M512 231 L560 213 L640 194 L660 189" stroke-width="4"/>
        <path d="M724 152 C708 154 690 160 683 169 C678 188 700 196 726 193 C745 190 756 178 750 168 C744 161 724 159 690 165" stroke-width="6"/>
      </g>
      <path d="M642 182 L648 179 L656 183 L678 183 L667 191 L646 202 L653 193 L642 190Z" fill="#f00000"/>
      <text x="5" y="227">откры</text><text x="154" y="227">ть</text><text x="226" y="227">список</text><text x="396" y="227">VFS</text>
    </svg>`;
  }

  render() {
    return html`
      <header class="title">
        ${icon(iDC)}
        <h1>Double Commander 1.0.0 alpha build 9560; 2020/10/15</h1>
        <div class="winbtns">
          <button aria-label="Свернуть"><svg width="10" height="10" viewBox="0 0 10 10"><path d="M1 8h8" stroke="#222" stroke-width="2"/></svg></button>
          <button aria-label="Восстановить"><svg width="10" height="10" viewBox="0 0 10 10"><path d="M.5 3h7v6.500h-7zM.5 3.500h7M2.500 2V.5H10V7.500H8.500" fill="none" stroke="#222" stroke-width="1.200"/></svg></button>
          <button class="close" aria-label="Закрыть"><svg width="8" height="8" viewBox="0 0 8 8"><path d="M.5 .5l7 7M7.500 .5l-7 7" stroke="#fff" stroke-width="2"/></svg></button>
        </div>
      </header>
      <nav class="menu">
        ${["Файлы", "Выделение", "Команды", "Сеть", "Вкладки", "Избранное", "Вид", "Настройки", "Помощь"].map((m) => html`<button>${m}</button>`)}
      </nav>
      <div class="drivebar">${this.driveButtons()}${this.driveButtons()}</div>
      <main class="main">
        ${this.panel("left")}
        <div class="commands">
          ${commands.map((c) => (c ? html`<button aria-label=${c[0]}>${icon(c[1])}</button>` : html`<hr />`))}
        </div>
        ${this.panel("right")}
      </main>
      <div class="cmd">
        <label for="cmd">\\&gt;</label>
        <div class="box"><input id="cmd" type="text" /><button aria-label="История команд">${chevron("M0.500 2 L4 5.500 L7.500 2")}</button></div>
      </div>
      <footer class="taskbar">
        <button class="start" aria-label="Пуск">${icon(iStart, 13)}</button>
        <div class="tasks">
          ${tasks.map((t) => html`<button class="task ${t.kind}" aria-label=${t.name}>
            <span class="face">${icon(t.icon)}</span>${Array.from({ length: t.stack }, () => html`<span class="leaf"></span>`)}
          </button>`)}
        </div>
        <div class="tray">
          <button class="kbd" aria-label="Клавиатура">${icon(iKeyboard)}</button>
          ${tray.map(([name, i]) => html`<button aria-label=${name}>${icon(i)}</button>`)}
          <button class="lang">РУС</button>
        </div>
      </footer>
      ${this.marks()}
    `;
  }
}
